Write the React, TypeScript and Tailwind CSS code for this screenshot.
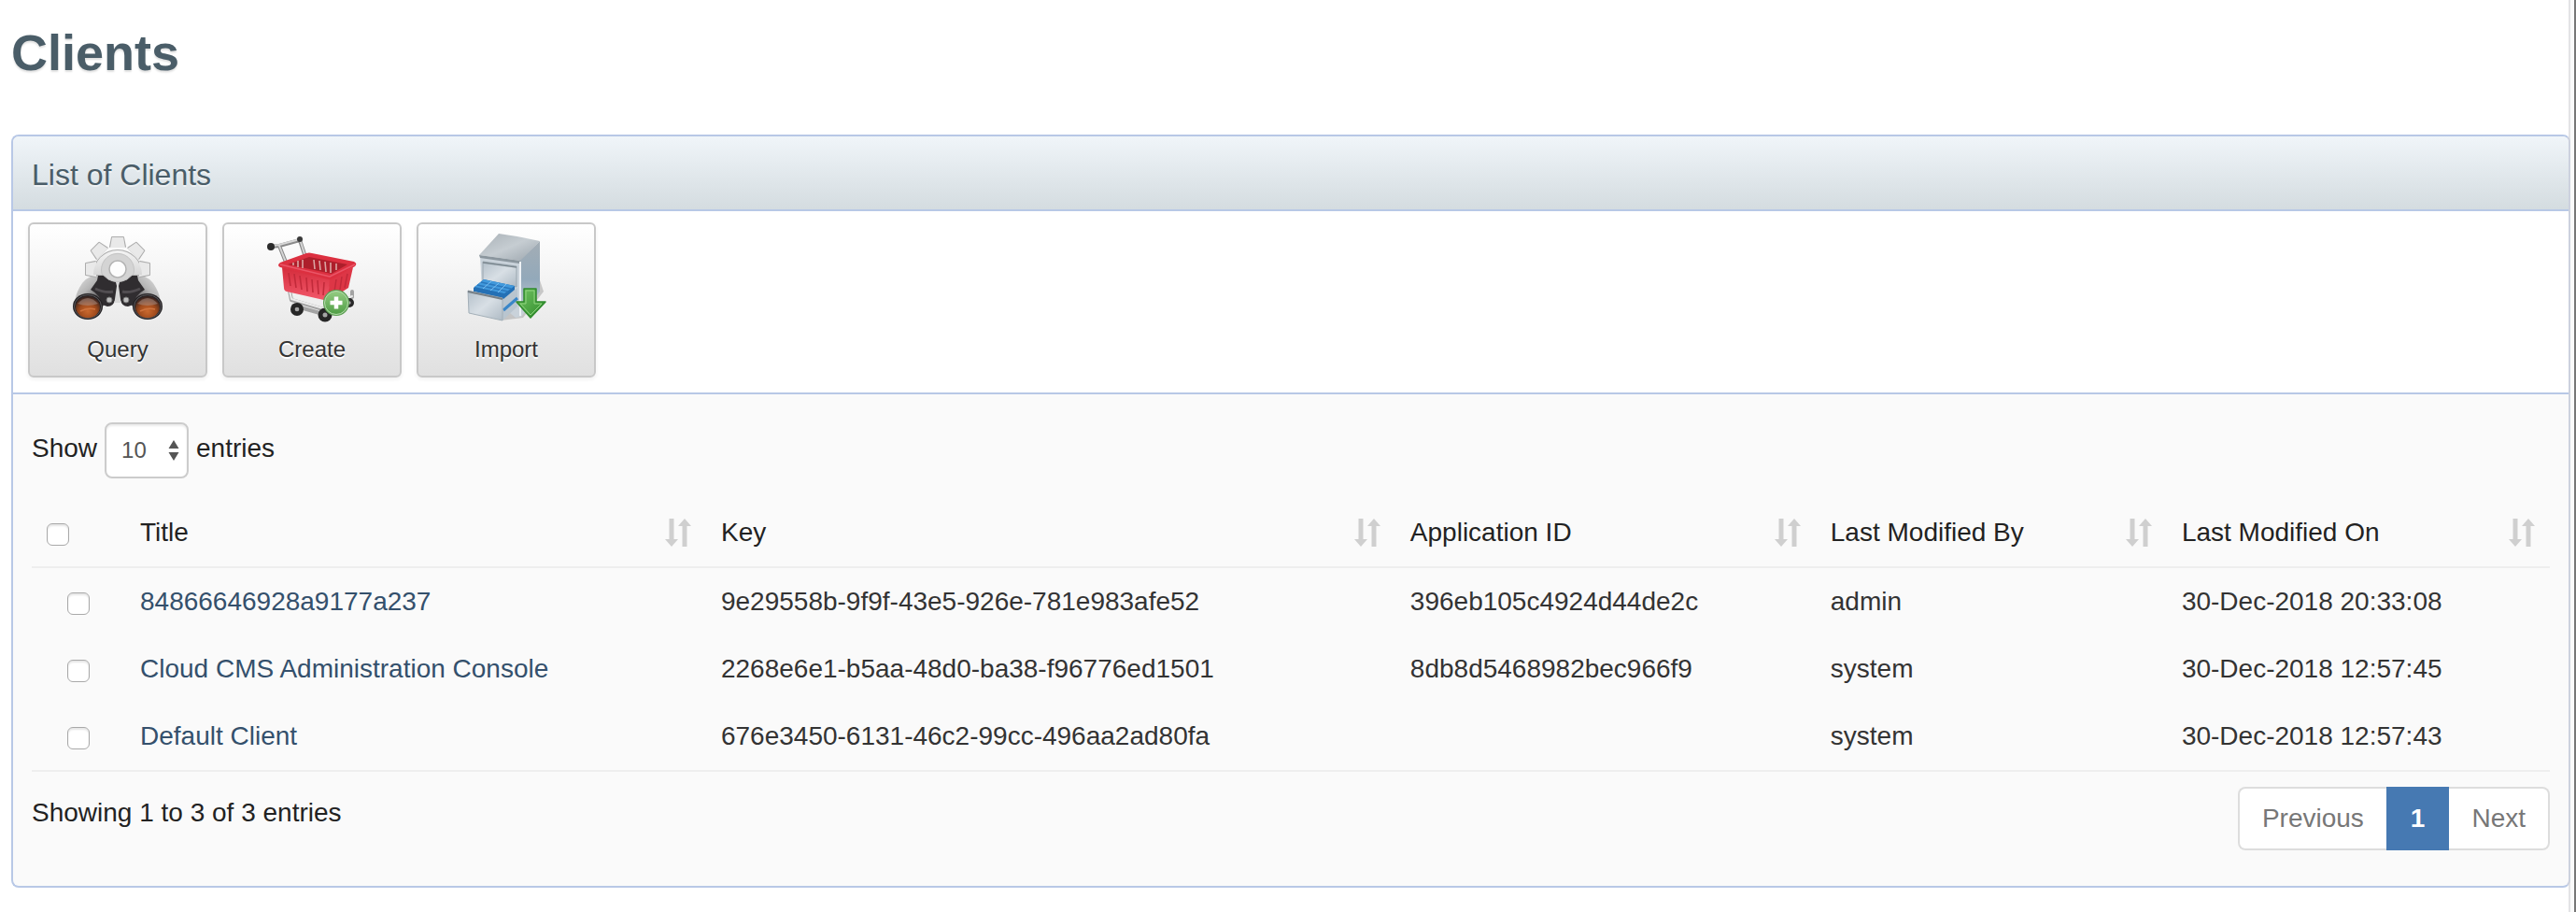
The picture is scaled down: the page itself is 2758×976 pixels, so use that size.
import { useState } from "react";
import type { ReactNode } from "react";

type Client = {
  title: string;
  key: string;
  applicationId: string;
  modifiedBy: string;
  modifiedOn: string;
};

const CLIENTS: Client[] = [
  {
    title: "84866646928a9177a237",
    key: "9e29558b-9f9f-43e5-926e-781e983afe52",
    applicationId: "396eb105c4924d44de2c",
    modifiedBy: "admin",
    modifiedOn: "30-Dec-2018 20:33:08",
  },
  {
    title: "Cloud CMS Administration Console",
    key: "2268e6e1-b5aa-48d0-ba38-f96776ed1501",
    applicationId: "8db8d5468982bec966f9",
    modifiedBy: "system",
    modifiedOn: "30-Dec-2018 12:57:45",
  },
  {
    title: "Default Client",
    key: "676e3450-6131-46c2-99cc-496aa2ad80fa",
    applicationId: "",
    modifiedBy: "system",
    modifiedOn: "30-Dec-2018 12:57:43",
  },
];

const COLUMNS = [
  { label: "Title", width: "w-[23.07%]" },
  { label: "Key", width: "w-[27.37%]" },
  { label: "Application ID", width: "w-[16.69%]" },
  { label: "Last Modified By", width: "w-[13.95%]" },
  { label: "Last Modified On", width: "" },
];

// the bottom three teeth are hidden behind the binoculars
const TEETH = [0, 45, 90, 270, 315];

function QueryIcon() {
  return (
    <svg viewBox="0 0 96 96" className="size-24" aria-hidden="true">
      <defs>
        <linearGradient id="gear" x1="0" y1="0" x2="0" y2="1">
          <stop offset="0" stopColor="#f4f4f4" />
          <stop offset="1" stopColor="#cfcfcf" />
        </linearGradient>
        <linearGradient id="tube-left" x1="0" y1="0" x2="1" y2="1">
          <stop offset="0" stopColor="#e9e9e9" />
          <stop offset="0.4" stopColor="#b5b5b5" />
          <stop offset="0.7" stopColor="#4a474a" />
        </linearGradient>
        <linearGradient id="tube-right" x1="1" y1="0" x2="0" y2="1">
          <stop offset="0" stopColor="#e9e9e9" />
          <stop offset="0.4" stopColor="#b5b5b5" />
          <stop offset="0.7" stopColor="#4a474a" />
        </linearGradient>
        <radialGradient id="lens" cx="0.5" cy="0.7" r="0.65">
          <stop offset="0" stopColor="#c9692f" />
          <stop offset="0.55" stopColor="#a04a1c" />
          <stop offset="1" stopColor="#3a2520" />
        </radialGradient>
      </defs>

      <path d="M26 43 Q12 47 7 58 Q3 65 2 74 L31 80 L42 60 L36 44 Z" fill="url(#tube-left)" />
      <path d="M70 43 Q84 47 89 58 Q93 65 94 74 L65 80 L54 60 L60 44 Z" fill="url(#tube-right)" />
      <path d="M40 46 H56 V72 H40 Z" fill="#a3a1a2" />
      <path d="M45 50 H51 V74 H45 Z" fill="#d9d9d9" />
      <path d="M28 40 L44 44 L47 56 L45 70 Q44 78 37 78 L31 76 Q30 66 19 60 L26 50 Z" fill="#302d30" />
      <path d="M68 40 L52 44 L49 56 L51 70 Q52 78 59 78 L65 76 Q66 66 77 60 L70 50 Z" fill="#302d30" />
      <path d="M24 59 Q35 64 43 62 M72 59 Q61 64 53 62" fill="none" stroke="#514d51" strokeWidth="3" />
      <circle cx="39" cy="71" r="3" fill="#bdbdbd" stroke="#777" />
      <circle cx="57" cy="71" r="3" fill="#bdbdbd" stroke="#777" />

      <g stroke="#adadad" strokeWidth="2" strokeLinejoin="round">
        {TEETH.map((deg) => (
          <path key={deg} d="M40 14 L42 4 H54 L56 14 Z" transform={`rotate(${deg} 48 38)`} />
        ))}
        <path d="M22 44 A26 26 0 1 1 74 44 L60 44 A14 14 0 0 1 36 44 Z" />
      </g>
      <g fill="url(#gear)">
        {TEETH.map((deg) => (
          <path key={deg} fill="#e9e9e9" d="M40 15 L42 4 H54 L56 15 Z" transform={`rotate(${deg} 48 38)`} />
        ))}
        <path d="M22 44 A26 26 0 1 1 74 44 L60 44 A14 14 0 0 1 36 44 Z" />
      </g>
      <path d="M31 43 A17.500 17.500 0 1 1 65 43 L58 49 Q48 54 38 49 Z" fill="#d4d4d4" stroke="#c4c4c4" />
      <circle cx="48" cy="38" r="9" fill="#fdfdfd" stroke="#b3b3b3" strokeWidth="1.500" />

      {[16, 80].map((cx) => (
        <g key={cx}>
          <ellipse cx={cx} cy="78" rx="16" ry="14" fill="#232123" />
          <ellipse cx={cx} cy="78" rx="14.500" ry="12.500" fill="none" stroke="#5e5a5d" />
          <ellipse cx={cx} cy="78.500" rx="13" ry="11.500" fill="url(#lens)" />
          <path d={`M${cx - 11} 75 Q${cx} 63 ${cx + 11} 75 Q${cx} 79 ${cx - 11} 75 Z`} fill="#a9948c" opacity="0.5" />
          <path d={`M${cx - 8} 83 Q${cx} 79 ${cx + 8} 81`} fill="none" stroke="#cf7440" strokeWidth="1.500" />
        </g>
      ))}
    </svg>
  );
}

function CreateIcon() {
  return (
    <svg viewBox="0 0 96 96" className="size-24" aria-hidden="true">
      <defs>
        <linearGradient id="basket" x1="0" y1="0" x2="0" y2="1">
          <stop offset="0" stopColor="#d42c3b" />
          <stop offset="1" stopColor="#f2596c" />
        </linearGradient>
        <linearGradient id="plus" x1="0" y1="0" x2="0" y2="1">
          <stop offset="0" stopColor="#94cc83" />
          <stop offset="1" stopColor="#4f9e45" />
        </linearGradient>
      </defs>

      <g fill="none" strokeLinecap="round" strokeLinejoin="round">
        <path d="M4 14 L13 13 L35 7 L41 25 M13 13 L21 33" stroke="#8a8a8a" strokeWidth="4" />
        <path d="M6 13 L13 12 L35 6 L41 25 M13 13 L21 33" stroke="#d6d6d6" strokeWidth="2" />
        <path d="M24 61 L26 71 L60 81 L91 68 V62 M28 77 L60 86" stroke="#a3a3a3" strokeWidth="4" />
        <path d="M24 61 L26 70 L60 80 L91 67" stroke="#ececec" strokeWidth="2" />
      </g>
      <circle cx="4" cy="14" r="4" fill="#2c2c2c" />
      <circle cx="35" cy="6" r="3" fill="#3a3a3a" />

      {[
        [32, 81, 7],
        [62, 87, 7.5],
        [88, 74, 5],
      ].map(([cx, cy, r]) => (
        <g key={cx}>
          <circle cx={cx} cy={cy} r={r} fill="#272727" />
          <circle cx={cx} cy={cy} r={r / 3} fill="#a5a5a5" />
        </g>
      ))}

      <path d="M16 36 L68 48 L65 72 L21 62 Q18 61 18 58 Z" fill="url(#basket)" />
      <path d="M67 48 L92 36 L87 58 L65 72 Z" fill="#dd3646" />
      <path
        d="M23 42 L25 56 M29 43 L31 58 M35 45 L37 60 M42 47 L43 62 M48 49 L49 63 M54 50 L55 65 M61 52 L60 66"
        stroke="#c22a3a"
        strokeWidth="1.600"
      />
      <path d="M74 49 L72 62 M80 46 L78 60 M86 43 L83 58" stroke="#c22a3a" strokeWidth="1.500" />
      <path
        d="M42 21 Q45 20 48 21 L93 30 Q97 32 94 35 L71 48 Q68 50 65 49 L14 36 Q10 34 14 31 Z"
        fill="#dc3040"
      />
      <path d="M45 25 L86 33 L69 43 L22 33 Z" fill="#ad1f2b" />
      <path
        d="M28 31 V34 M33 29 V36 M38 28 V37 M50 28 L51 38 M56 29 L57 39 M62 30 L63 41 M68 31 V42 M74 32 V39"
        stroke="#dba5a3"
        strokeWidth="1.600"
      />
      <path d="M14 33 L67 46 L94 33" fill="none" stroke="#ea5567" strokeWidth="1.500" />

      <circle cx="74" cy="74" r="14" fill="#5a9e50" />
      <circle cx="74" cy="74" r="12.500" fill="url(#plus)" stroke="#b9ddb0" />
      <path d="M74 67.500 V80.500 M67.500 74 H80.500" stroke="#fff" strokeWidth="4.500" />
    </svg>
  );
}

function ImportIcon() {
  return (
    <svg viewBox="0 0 96 96" className="size-24" aria-hidden="true">
      <defs>
        <linearGradient id="cabinet-top" x1="0" y1="0" x2="1" y2="1">
          <stop offset="0" stopColor="#a9b1b7" />
          <stop offset="0.5" stopColor="#c6cdd2" />
          <stop offset="1" stopColor="#9aa4ac" />
        </linearGradient>
        <linearGradient id="cabinet-side" x1="0" y1="0" x2="0" y2="1">
          <stop offset="0" stopColor="#a3adb5" />
          <stop offset="0.5" stopColor="#93a9ba" />
          <stop offset="1" stopColor="#ccd5dc" />
        </linearGradient>
        <linearGradient id="drawer" x1="0" y1="0" x2="1" y2="1">
          <stop offset="0" stopColor="#b4c0ca" />
          <stop offset="0.5" stopColor="#d8dfe5" />
          <stop offset="1" stopColor="#aebac4" />
        </linearGradient>
        <linearGradient id="arrow" x1="0" y1="0" x2="1" y2="1">
          <stop offset="0" stopColor="#73c463" />
          <stop offset="1" stopColor="#2f8c2b" />
        </linearGradient>
      </defs>

      <path d="M84 50 L88 62 L66 90 L42 93 Z" fill="#8a8a8a" opacity="0.4" />
      <path d="M84 8 L84 62 L64 89 L62 29 Z" fill="url(#cabinet-side)" />
      <path d="M20 24 L63 29 L64 89 L58 90 L22 60 Z" fill="#c9d2da" />
      <path d="M40 0 Q62 3 84 8 L63 29 L19 23 Z" fill="url(#cabinet-top)" />
      <path d="M19 23 L63 29 L62 32 L20 26 Z" fill="#8b969e" />
      <path d="M23 30 L59 35 V57 L23 51 Z" fill="url(#drawer)" stroke="#9aa6af" />
      <path d="M23 31 L59 36" stroke="#7d8991" strokeWidth="1.500" />
      <path d="M63 30 V88" stroke="#eef2f5" strokeWidth="2" />

      <path d="M44 69 L60 58 V78 L44 93 Z" fill="#b9c5cf" />
      <path d="M45 82 L60 69" stroke="#3a86c8" strokeWidth="3" />
      <path d="M24 49 L57 56 V60 L45 70 L13 62 V58 Z" fill="#2470b5" />
      <path d="M24 49 L57 56 L46 64 L14 57 Z" fill="#4199dc" />
      <path d="M21 52 L53 59 M17 55 L50 62" stroke="#2b78bd" strokeWidth="1.500" />
      <path d="M32 51 L23 59 M40 53 L31 61 M48 54 L39 63" stroke="#7cbdf0" />
      <path d="M7 61 L44 69 V93 L8 85 Z" fill="url(#drawer)" stroke="#a3afb8" />
      <path d="M7 62 L44 70" stroke="#767f86" strokeWidth="2" />

      <path
        d="M67 59 H80 V73 H90 L74 90 L59 73 H67 Z"
        fill="url(#arrow)"
        stroke="#2f8a2c"
        strokeWidth="1.500"
        strokeLinejoin="round"
      />
      <path d="M69 61 H78 V75 H86 L74 87 L63 75 H69 Z" fill="none" stroke="#8fd47f" />
    </svg>
  );
}

function SortIcon() {
  return (
    <svg viewBox="0 0 28 30" className="h-[30px] w-7 shrink-0" fill="#cfcfcf" aria-hidden="true">
      <path d="M4.500 0 H9.500 V22 H14 L7 30 L0 22 H4.500 Z" />
      <path d="M18.500 30 H23.500 V8 H28 L21 0 L14 8 H18.500 Z" />
    </svg>
  );
}

function ToolButton({ label, icon }: { label: string; icon: ReactNode }) {
  return (
    <button
      type="button"
      className="flex w-48 flex-col items-center rounded-md border-2 border-[#c8c8c8] bg-linear-to-b from-white to-[#e0e0e0] px-4 pt-2.5 pb-3.5 text-2xl leading-7 text-[#333] shadow-[0_2px_4px_#00000010] text-shadow-[0_2px_0_#ffffff]"
    >
      {icon}
      <span className="mt-3.5">{label}</span>
    </button>
  );
}

function Checkbox({ label, checked, onChange }: { label: string; checked: boolean; onChange: () => void }) {
  return (
    <input
      type="checkbox"
      aria-label={label}
      checked={checked}
      onChange={onChange}
      className="block size-6 appearance-none rounded-md border border-[#a9a9a9] bg-white shadow-[inset_0_2px_2px_#0000001a] checked:bg-[#4679b2]"
    />
  );
}

export default function App() {
  const [selected, setSelected] = useState<string[]>([]);
  const [pageSize, setPageSize] = useState("10");

  const allSelected = selected.length === CLIENTS.length;

  function toggle(key: string) {
    setSelected((prev) => (prev.includes(key) ? prev.filter((k) => k !== key) : [...prev, key]));
  }

  return (
    <div className="flex min-h-screen bg-white font-['Liberation_Sans',Arial,sans-serif] text-[28px] leading-10 text-[#222]">
      <main className="min-w-0 flex-1 border-r-2 border-[#e3e3e6] pl-3">
        <h1 className="pt-6 text-[54px] leading-16 font-bold text-[#4a5d68] text-shadow-[0_2px_2px_#00000020]">
          Clients
        </h1>

        <section className="mt-14 -mr-0.5 overflow-hidden rounded-lg border-2 border-[#b8c8e6] border-r-[#ccd1de] bg-[#fafafa]">
          <h2 className="border-b-2 border-[#b8c8e6] bg-linear-to-b from-[#f0f5f9] to-[#d4dce0] px-5 pt-5 pb-4 text-[32px] leading-[42px] text-[#4a5d68] text-shadow-[0_2px_0_#ffffff80]">
            List of Clients
          </h2>

          <div className="flex gap-4 border-b-2 border-[#b8c8e6] bg-white px-4 pt-3 pb-4">
            <ToolButton label="Query" icon={<QueryIcon />} />
            <ToolButton label="Create" icon={<CreateIcon />} />
            <ToolButton label="Import" icon={<ImportIcon />} />
          </div>

          <div className="px-5 pt-[30px] pb-[38px]">
            <label className="flex items-start gap-2 leading-14">
              Show
              <span className="relative">
                <select
                  value={pageSize}
                  onChange={(e) => setPageSize(e.target.value)}
                  className="block h-[60px] w-[90px] appearance-none rounded-lg border-2 border-[#ccc] bg-white pl-4 text-2xl text-[#555] shadow-[inset_0_2px_2px_#00000013]"
                >
                  <option>10</option>
                  <option>25</option>
                  <option>50</option>
                  <option>100</option>
                </select>
                <svg
                  viewBox="0 0 12 22"
                  className="pointer-events-none absolute top-[19px] right-2.5 h-[22px] w-3"
                  fill="#555"
                  aria-hidden="true"
                >
                  <path d="M6 0 L11.500 9 H0.500 Z M6 22 L11.500 13 H0.500 Z" />
                </svg>
              </span>
              entries
            </label>

            <table className="mt-[18px] w-full table-fixed border-separate border-spacing-0 border-b-2 border-[#eee] text-left">
              <thead>
                <tr className="h-[78px]">
                  <th className="w-[100px] border-b-2 border-[#eee] pt-2 pl-4">
                    <Checkbox
                      label="Select all"
                      checked={allSelected}
                      onChange={() => setSelected(allSelected ? [] : CLIENTS.map((c) => c.key))}
                    />
                  </th>
                  {COLUMNS.map((col) => (
                    <th key={col.label} className={`border-b-2 border-[#eee] px-4 pt-1 font-normal ${col.width}`}>
                      <div className="flex items-center justify-between">
                        {col.label}
                        <SortIcon />
                      </div>
                    </th>
                  ))}
                </tr>
              </thead>
              <tbody className="text-[#333]">
                {CLIENTS.map((client) => (
                  <tr key={client.key} className="h-[72px]">
                    <td className="pt-1 pl-[38px]">
                      <Checkbox
                        label={`Select ${client.title}`}
                        checked={selected.includes(client.key)}
                        onChange={() => toggle(client.key)}
                      />
                    </td>
                    <td className="px-4">
                      <a href="#" className="text-[#34506c]">
                        {client.title}
                      </a>
                    </td>
                    <td className="px-4">{client.key}</td>
                    <td className="px-4">{client.applicationId}</td>
                    <td className="px-4">{client.modifiedBy}</td>
                    <td className="px-4">{client.modifiedOn}</td>
                  </tr>
                ))}
              </tbody>
            </table>

            <div className="flex items-start justify-between pt-4">
              <p className="pt-2">Showing 1 to 3 of 3 entries</p>
              <nav aria-label="Pagination" className="flex text-[#777]">
                <button type="button" className="rounded-l-lg border-2 border-r-0 border-[#ddd] bg-white px-6 py-3">
                  Previous
                </button>
                <button
                  type="button"
                  aria-current="page"
                  className="border-2 border-[#4679b2] bg-[#4679b2] px-6 py-3 font-bold text-white"
                >
                  1
                </button>
                <button type="button" className="rounded-r-lg border-2 border-l-0 border-[#ddd] bg-white px-6 py-3">
                  Next
                </button>
              </nav>
            </div>
          </div>
        </section>
      </main>

      {/* scroll gutter and window edge */}
      <div className="w-1.5 border-r-2 border-[#777] bg-[#fafafa]" />
    </div>
  );
}
